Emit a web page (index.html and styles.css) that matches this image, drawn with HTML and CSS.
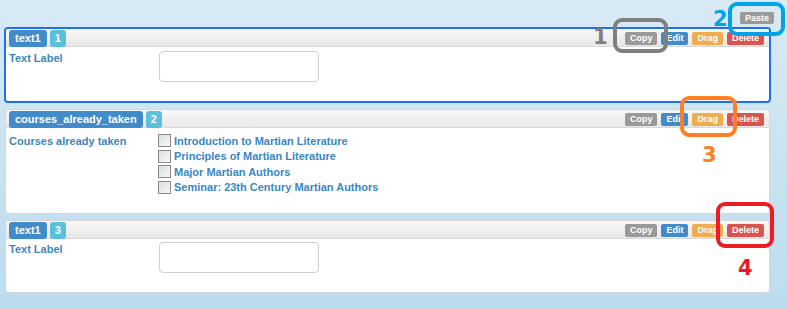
FILE: index.html
```html
<!DOCTYPE html>
<html lang="en">
<head>
    <meta charset="UTF-8">
    <title>Form builder</title>
    <link rel="stylesheet" href="styles.css">
</head>
<body>
    <div class="page">
        <div class="toolbar">
            <button class="btn btn-paste">Paste</button>
        </div>

        <div class="field selected">
            <div class="field-head">
                <span class="badge badge-name">text1</span>
                <span class="badge badge-num">1</span>
                <div class="actions">
                    <button class="btn btn-copy">Copy</button>
                    <button class="btn btn-edit">Edit</button>
                    <button class="btn btn-drag">Drag</button>
                    <button class="btn btn-delete">Delete</button>
                </div>
            </div>
            <div class="field-body">
                <label class="field-label">Text Label</label>
                <input type="text" class="text-input">
            </div>
        </div>

        <div class="field">
            <div class="field-head">
                <span class="badge badge-name">courses_already_taken</span>
                <span class="badge badge-num">2</span>
                <div class="actions">
                    <button class="btn btn-copy">Copy</button>
                    <button class="btn btn-edit">Edit</button>
                    <button class="btn btn-drag">Drag</button>
                    <button class="btn btn-delete">Delete</button>
                </div>
            </div>
            <div class="field-body">
                <label class="field-label label-checks">Courses already taken</label>
                <ul class="checks">
                    <li><span class="box"></span>Introduction to Martian Literature</li>
                    <li><span class="box"></span>Principles of Martian Literature</li>
                    <li><span class="box"></span>Major Martian Authors</li>
                    <li><span class="box"></span>Seminar: 23th Century Martian Authors</li>
                </ul>
            </div>
        </div>

        <div class="field">
            <div class="field-head">
                <span class="badge badge-name">text1</span>
                <span class="badge badge-num">3</span>
                <div class="actions">
                    <button class="btn btn-copy">Copy</button>
                    <button class="btn btn-edit">Edit</button>
                    <button class="btn btn-drag">Drag</button>
                    <button class="btn btn-delete">Delete</button>
                </div>
            </div>
            <div class="field-body">
                <label class="field-label">Text Label</label>
                <input type="text" class="text-input">
            </div>
        </div>

        <!-- annotations drawn over the screenshot -->
        <div class="ring ring-1"></div>
        <div class="num num-1">1</div>
        <div class="ring ring-2"></div>
        <div class="num num-2">2</div>
        <div class="ring ring-3"></div>
        <div class="num num-3">3</div>
        <div class="ring ring-4"></div>
        <div class="num num-4">4</div>
    </div>
</body>
</html>
```

FILE: styles.css
```css
html, body {
    margin: 0;
    height: 100%;
}
body {
    font-family: "Liberation Sans", Arial, sans-serif;
    background: linear-gradient(to bottom, #d8eaf5 0%, #bcdcee 100%);
}
.page {
    position: relative;
    padding: 0 17px 0 5px;
}
.toolbar {
    display: flex;
    justify-content: flex-end;
    height: 28px;
    padding-top: 12px;
    box-sizing: border-box;
    margin-right: -4px;
}
.btn {
    font-family: "Liberation Sans", Arial, sans-serif;
    font-weight: bold;
    font-size: 9px;
    height: 13px;
    line-height: 13px;
    padding: 0 5px;
    border: none;
    border-radius: 2px;
    color: #fff;
    cursor: pointer;
}
.btn-paste { height: 12px; line-height: 12px; background: #9a9a9a; }
.btn-copy { background: #999; }
.btn-edit { background: #428bca; }
.btn-drag { background: #f0ad4e; }
.btn-delete { background: #d9534f; }

.field {
    background: #fff;
    border: 1px solid #d6d6d6;
    border-radius: 4px;
    margin-bottom: 6px;
    overflow: hidden;
}
.field.selected {
    border: 2px solid #1e6ff1;
    margin: -1px -1px 6px;
}
.field-head {
    display: flex;
    align-items: flex-start;
    gap: 3px;
    height: 18px;
    padding: 1px 5px 0 3px;
    box-sizing: border-box;
    background: linear-gradient(to bottom, #f8f8f8, #e8e8e8);
    border-bottom: 1px solid #d8d8d8;
}
.badge {
    height: 17px;
    line-height: 17px;
    padding: 0 6px;
    border-radius: 3px;
    color: #fff;
    font-size: 11px;
    font-weight: bold;
}
.badge-name { background: #428bca; }
.badge-num { background: #5bc0de; padding: 0 5px; }
.actions {
    margin-left: auto;
    display: flex;
    gap: 4px;
    padding-top: 2px;
}
.field-body {
    display: grid;
    grid-template-columns: 150px auto;
    align-items: start;
    padding: 3px 4px 19px 3px;
}
.selected .field-body {
    padding-top: 4px;
}
.field-label {
    font-size: 11px;
    font-weight: bold;
    line-height: 15px;
    color: #3a87c2;
}
.label-checks {
    margin-top: 3px;
}
.text-input {
    width: 160px;
    height: 31px;
    box-sizing: border-box;
    border: 1px solid #cfcfcf;
    border-radius: 4px;
    justify-self: start;
}
.checks {
    list-style: none;
    margin: 2px 0 -1px -1px;
    padding: 0;
}
.checks li {
    display: flex;
    align-items: center;
    height: 15.5px;
    font-size: 11px;
    font-weight: bold;
    color: #3a87c2;
}
.box {
    width: 13px;
    height: 13px;
    box-sizing: border-box;
    border: 1px solid #8a8a8a;
    background: linear-gradient(to bottom right, #dcdcdc, #fafafa);
    margin-right: 3px;
}

.ring {
    position: absolute;
    box-sizing: border-box;
    border: 4px solid;
    border-radius: 9px;
}
.ring-1 { left: 613px; top: 18px; width: 55px; height: 35px; border-color: #7f7f7f; }
.ring-2 { left: 728px; top: 2px; width: 57px; height: 34px; border-color: #00a2e8; }
.ring-3 { left: 680px; top: 96px; width: 57px; height: 41px; border-color: #ff7f27; }
.ring-4 { left: 716px; top: 202px; width: 58px; height: 46px; border-color: #ed1c24; }
.num {
    position: absolute;
    font-family: "DejaVu Sans", sans-serif;
    font-weight: bold;
    font-size: 21px;
    line-height: 21px;
}
.num-1 { left: 593px; top: 27px; color: #7f7f7f; }
.num-2 { left: 713px; top: 9px; color: #00a2e8; }
.num-3 { left: 702px; top: 145px; color: #ff7f27; }
.num-4 { left: 738px; top: 258px; color: #ed1c24; }
```
